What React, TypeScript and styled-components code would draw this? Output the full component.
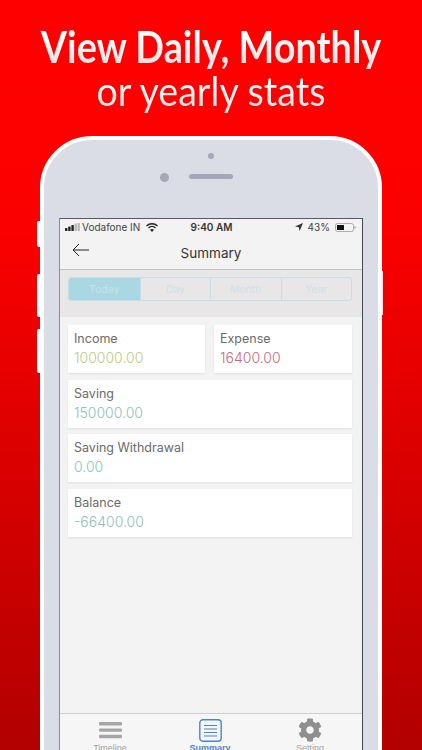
import React, { FunctionComponent } from "react";
import styled, { createGlobalStyle } from "styled-components";
import { FaCog } from "react-icons/fa";

const GlobalStyle = createGlobalStyle`
  html, body {
    margin: 0;
    padding: 0;
    background: #b80000;
  }
`;

const Page = styled.div`
  width: 422px;
  height: 750px;
  overflow: hidden;
  display: flex;
  flex-direction: column;
  align-items: center;
  background: linear-gradient(180deg, #ff0000 0%, #fb0000 30%, #b20000 100%);
  font-family: "Open Sans", "Liberation Sans", sans-serif;
`;

const Heading = styled.h1`
  margin: 24px 0 0;
  height: 90px;
  width: 100%;
  text-align: center;
  font-family: "Lato", "Liberation Sans", sans-serif;
`;

const HeadingLine = styled.span<{ $light?: boolean }>`
  display: block;
  font-weight: ${(p) => (p.$light ? 400 : 700)};
  font-size: ${(p) => (p.$light ? 40 : 43)}px;
  line-height: 45px;
  white-space: nowrap;
  transform: scaleX(${(p) => (p.$light ? 0.94 : 0.88)});
  background: linear-gradient(180deg, #ffffff 25%, #e9e4e4 80%);
  -webkit-background-clip: text;
  background-clip: text;
  color: transparent;
`;

const Phone = styled.div`
  position: relative;
  box-sizing: border-box;
  flex: none;
  width: 342px;
  height: 700px;
  margin-top: 22px;
  padding: 78px 15px 0;
  background: #dadde6;
  border: 4px solid #ffffff;
  border-radius: 52px;
`;

const SideButton = styled.div<{ $top: number; $height: number }>`
  position: absolute;
  left: -7px;
  top: ${(p) => p.$top}px;
  width: 3px;
  height: ${(p) => p.$height}px;
  background: #ffffff;
  border-radius: 2px 0 0 2px;
`;

const PowerButton = styled.div`
  position: absolute;
  right: -5px;
  top: 131px;
  width: 1px;
  height: 44px;
  background: #ffd9d9;
`;

const Camera = styled.div`
  position: absolute;
  left: 116px;
  top: 33px;
  width: 9px;
  height: 9px;
  border-radius: 50%;
  background: #a6a8b6;
`;

const Sensor = styled.div`
  position: absolute;
  left: 164px;
  top: 13px;
  width: 6px;
  height: 6px;
  border-radius: 50%;
  background: #a6a8b6;
`;

const Speaker = styled.div`
  position: absolute;
  left: 145px;
  top: 34px;
  width: 44px;
  height: 5px;
  border-radius: 3px;
  background: #a6a8b6;
`;

const Screen = styled.div`
  box-sizing: border-box;
  width: 304px;
  height: 555px;
  display: flex;
  flex-direction: column;
  background: #f3f3f3;
  border-top: 1px solid #555a62;
  border-left: 1px solid #8a8d94;
  border-right: 1.5px solid #44484f;
`;

const StatusBar = styled.div`
  box-sizing: border-box;
  height: 17px;
  flex: none;
  display: grid;
  grid-template-columns: 1fr auto 1fr;
  align-items: center;
  padding: 0 6px 1px 5px;
  font-family: "Inter", "Liberation Sans", sans-serif;
  font-size: 10px;
  color: #444;
`;

const StatusLeft = styled.div`
  display: flex;
  align-items: center;
  gap: 2px;
`;

const StatusRight = styled.div`
  display: flex;
  align-items: center;
  justify-content: flex-end;
  gap: 5px;
`;

const StatusTime = styled.div`
  font-weight: 600;
  font-size: 10px;
  color: #333;
  padding-left: 2px;
`;

const NavBar = styled.div`
  position: relative;
  flex: none;
  height: 33px;
  display: flex;
  align-items: center;
  justify-content: center;
  border-bottom: 1px solid #c4c4c6;
  font-family: "Inter", "Liberation Sans", sans-serif;
  font-size: 13.5px;
  color: #333;
`;

const BackIcon = styled.svg`
  position: absolute;
  left: 12px;
  top: 7px;
`;

const SegmentZone = styled.div`
  flex: none;
  height: 47px;
  box-sizing: border-box;
  padding: 7px 10px 0 8px;
  background: #e8e6e6;
`;

const Segments = styled.div`
  height: 24px;
  box-sizing: border-box;
  display: grid;
  grid-template-columns: repeat(4, 1fr);
  border: 1px solid #c5dfe6;
  border-radius: 3px;
  overflow: hidden;
`;

const Segment = styled.div<{ $active?: boolean }>`
  display: flex;
  align-items: center;
  justify-content: center;
  font-family: "Inter", "Liberation Sans", sans-serif;
  font-size: 10.5px;
  color: ${(p) => (p.$active ? "#c4e2ea" : "#cfe1e6")};
  background: ${(p) => (p.$active ? "#a9d8e3" : "transparent")};
  & + & {
    border-left: 1px solid #c5dfe6;
  }
`;

const Cards = styled.div`
  flex: 1;
  min-height: 0;
  padding: 8px 10px 0 8px;
  display: flex;
  flex-direction: column;
  gap: 6.5px;
`;

const CardRow = styled.div`
  display: grid;
  grid-template-columns: 137px 138px;
  justify-content: space-between;
`;

const Card = styled.div`
  box-sizing: border-box;
  height: 48px;
  padding: 5px 6px 0;
  background: #ffffff;
  box-shadow: 0 1px 2px rgba(0, 0, 0, 0.08);
`;

const CardLabel = styled.div`
  font-family: "Inter", "Liberation Sans", sans-serif;
  font-size: 12.5px;
  line-height: 18px;
  color: #6a6a6a;
`;

const CardValue = styled.div<{ $color: string }>`
  font-family: "Inter", "Liberation Sans", sans-serif;
  font-size: 14px;
  font-weight: 300;
  line-height: 19px;
  color: ${(p) => p.$color};
`;

const TabBar = styled.div`
  flex: none;
  height: 60px;
  box-sizing: border-box;
  padding-top: 4px;
  display: grid;
  grid-template-columns: 100px 100px 100px;
  border-top: 1px solid #cfcfcf;
  background: #f6f6f6;
`;

const Tab = styled.div<{ $active?: boolean }>`
  display: flex;
  flex-direction: column;
  align-items: center;
  gap: 1px;
  font-family: "Liberation Sans", sans-serif;
  font-size: 9px;
  font-weight: ${(p) => (p.$active ? 700 : 400)};
  color: ${(p) => (p.$active ? "#4a86c8" : "#a2a2a2")};
`;

const TabIcon = styled.div`
  height: 24px;
  display: flex;
  align-items: center;
  justify-content: center;
`;

const SignalBars = () => (
  <svg width="15" height="8" viewBox="0 0 15 8">
    <rect x="0" y="5" width="2.4" height="3" rx="0.5" fill="#222" />
    <rect x="3.2" y="3.5" width="2.4" height="4.5" rx="0.5" fill="#222" />
    <rect x="6.4" y="2" width="2.4" height="6" rx="0.5" fill="#222" />
    <rect x="9.6" y="0.5" width="2.2" height="7.5" rx="0.5" fill="#b4b4b4" />
    <rect x="12.6" y="0" width="2.2" height="8" rx="0.5" fill="#b4b4b4" />
  </svg>
);

const Wifi = () => (
  <svg width="12" height="9" viewBox="0 0 12 9" style={{ marginLeft: 4 }}>
    <path d="M0.5 3 A8 8 0 0 1 11.5 3" fill="none" stroke="#222" strokeWidth="1.4" />
    <path d="M2.5 5 A5 5 0 0 1 9.5 5" fill="none" stroke="#222" strokeWidth="1.4" />
    <path d="M6 9 L4 6.8 A3 3 0 0 1 8 6.8 Z" fill="#222" />
  </svg>
);

const LocationArrow = () => (
  <svg width="8" height="8" viewBox="0 0 8 8">
    <path d="M8 0 L0 3.4 L3.8 4.2 L4.6 8 Z" fill="#333" />
  </svg>
);

const Battery = () => (
  <svg width="21" height="9" viewBox="0 0 21 9">
    <rect x="0.5" y="0.5" width="18" height="8" rx="2" fill="none" stroke="#9a9a9a" strokeWidth="0.8" />
    <rect x="2" y="2" width="7" height="5" fill="#111" />
    <path d="M19.5 3 A1.6 1.6 0 0 1 19.5 6 Z" fill="#9a9a9a" />
  </svg>
);

const TimelineIcon = () => (
  <svg width="23" height="18" viewBox="0 0 23 18">
    <rect x="0" y="1" width="23" height="3.4" rx="1.2" fill="#a5a5a5" />
    <rect x="0" y="7.4" width="23" height="3.4" rx="1.2" fill="#a5a5a5" />
    <rect x="0" y="13.8" width="23" height="3.4" rx="1.2" fill="#a5a5a5" />
  </svg>
);

const SummaryIcon = () => (
  <svg width="23" height="23" viewBox="0 0 23 23">
    <rect x="0.8" y="0.8" width="21.4" height="21.4" rx="3" fill="none" stroke="#4a86d0" strokeWidth="1.4" />
    <path d="M5 6.5 H18 M5 10 H18 M5 13.5 H18 M5 17 H18" stroke="#4a86d0" strokeWidth="1.2" />
  </svg>
);

type StatProps = {
  label: string;
  value: string;
  color: string;
};

const Stat: FunctionComponent<StatProps> = ({ label, value, color }) => (
  <Card>
    <CardLabel>{label}</CardLabel>
    <CardValue $color={color}>{value}</CardValue>
  </Card>
);

const App = () => (
  <Page>
    <GlobalStyle />
    <Heading>
      <HeadingLine>View Daily, Monthly</HeadingLine>
      <HeadingLine $light>or yearly stats</HeadingLine>
    </Heading>
    <Phone>
      <SideButton $top={81} $height={26} />
      <SideButton $top={134} $height={43} />
      <SideButton $top={189} $height={44} />
      <PowerButton />
      <Sensor />
      <Camera />
      <Speaker />
      <Screen>
        <StatusBar>
          <StatusLeft>
            <SignalBars />
            Vodafone IN
            <Wifi />
          </StatusLeft>
          <StatusTime>9:40 AM</StatusTime>
          <StatusRight>
            <LocationArrow />
            43%
            <Battery />
          </StatusRight>
        </StatusBar>
        <NavBar>
          <BackIcon width="18" height="14" viewBox="0 0 18 14">
            <path d="M17 7 H1 M7 1 L1 7 L7 13" fill="none" stroke="#222" strokeWidth="1" />
          </BackIcon>
          Summary
        </NavBar>
        <SegmentZone>
          <Segments>
            <Segment $active>Today</Segment>
            <Segment>Day</Segment>
            <Segment>Month</Segment>
            <Segment>Year</Segment>
          </Segments>
        </SegmentZone>
        <Cards>
          <CardRow>
            <Stat label="Income" value="100000.00" color="#b9cd7d" />
            <Stat label="Expense" value="16400.00" color="#c8697c" />
          </CardRow>
          <Stat label="Saving" value="150000.00" color="#8fc0c0" />
          <Stat label="Saving Withdrawal" value="0.00" color="#8fc0c0" />
          <Stat label="Balance" value="-66400.00" color="#8fc0c0" />
        </Cards>
        <TabBar>
          <Tab>
            <TabIcon>
              <TimelineIcon />
            </TabIcon>
            Timeline
          </Tab>
          <Tab $active>
            <TabIcon>
              <SummaryIcon />
            </TabIcon>
            Summary
          </Tab>
          <Tab>
            <TabIcon>
              <FaCog size={24} color="#8f8f8f" />
            </TabIcon>
            Setting
          </Tab>
        </TabBar>
      </Screen>
    </Phone>
  </Page>
);

export default App;
